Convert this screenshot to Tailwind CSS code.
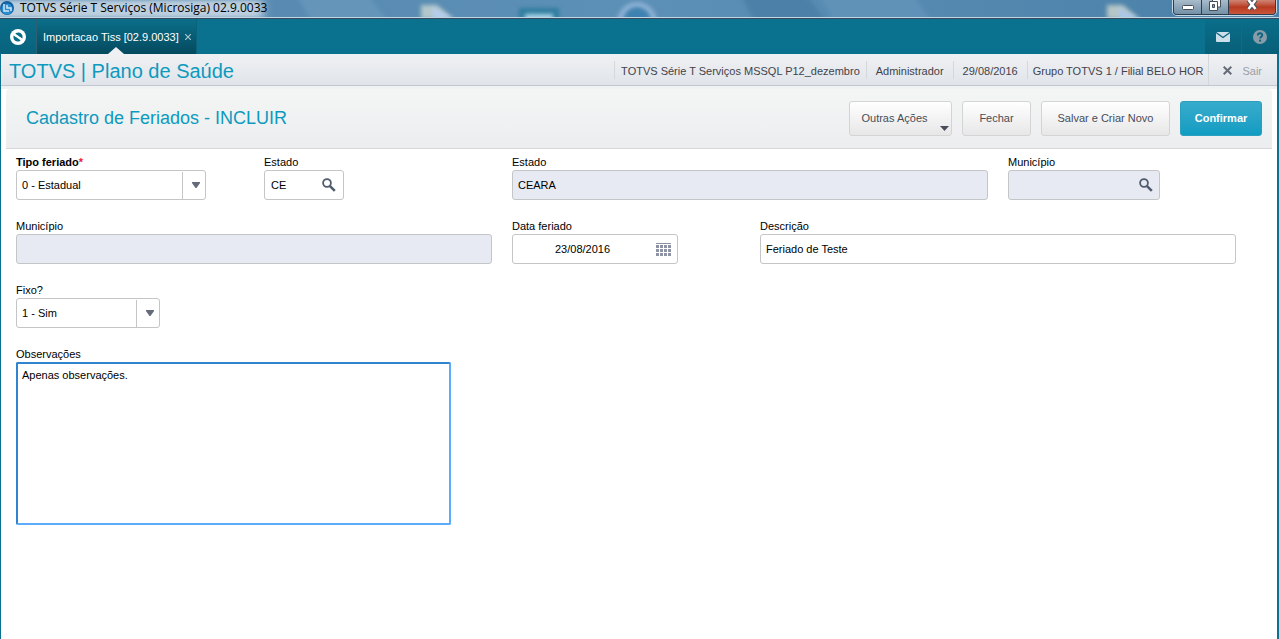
<!DOCTYPE html>
<html lang="pt-BR">
<head>
  <meta charset="UTF-8" />
  <meta name="viewport" content="width=device-width, initial-scale=1.0"/>
  <title>TOTVS Série T Serviços (Microsiga)</title>
  <script src="https://cdn.jsdelivr.net/npm/@tailwindcss/browser@4"></script>
</head>
<body class="min-h-screen flex flex-col bg-white font-['Liberation_Sans',Arial,sans-serif] text-[11px] leading-4 text-black">

  <!-- window title bar -->
  <header class="relative h-[19px] flex items-start justify-between overflow-hidden border-b border-[#3a4a5c] bg-linear-to-r from-[#5587ad] via-[#5d90b6] to-[#4a80a8]">
    <svg class="absolute inset-0 w-full h-[18px]" aria-hidden="true">
      <defs>
        <filter id="haze" x="-50%" y="-50%" width="200%" height="200%"><feGaussianBlur stdDeviation="2"/></filter>
        <filter id="haze2" x="-10%" y="-50%" width="120%" height="200%"><feGaussianBlur stdDeviation="5 2"/></filter>
      </defs>
      <path d="M296-6h70l24 30h-76z" fill="#6695ba" filter="url(#haze)"/>
      <path d="M740-6h66l22 30h-72z" fill="#4d80a8" filter="url(#haze)"/>
      <path d="M818-6h95l20 30h-97z" fill="#6092b8" filter="url(#haze)"/>
      <rect x="-20" y="0" width="283" height="18" fill="#bccfdf" filter="url(#haze2)"/>
      <path d="M421 5h16l16 14h-32z" fill="#b4c8cb" filter="url(#haze)"/>
      <path d="M432 7l22 12h-20z" fill="#b6cdf0" filter="url(#haze)"/>
      <rect x="519" y="8" width="40" height="14" fill="#2d7d9f" filter="url(#haze)"/>
      <rect x="525" y="14" width="28" height="8" fill="#a9d2e8" filter="url(#haze)"/>
      <circle cx="637" cy="22" r="17" fill="none" stroke="#94b6da" stroke-width="5" filter="url(#haze)"/>
      <circle cx="637" cy="20" r="12" fill="#3c82b0" filter="url(#haze)"/>
      <path d="M1107 5h16l16 14h-32z" fill="#b6c6c6" filter="url(#haze)"/>
      <path d="M1118 8l22 11h-20z" fill="#a9c8ec" filter="url(#haze)"/>
      <rect y="17" width="100%" height="1" fill="#c0d6e4"/>
    </svg>
    <div class="relative flex items-center gap-[6px] h-4">
      <svg class="w-[14px] h-4" viewBox="0 0 14 16" aria-hidden="true">
        <circle cx="7" cy="8" r="7" fill="#1560a0"/>
        <circle cx="7" cy="9" r="5.500" fill="#2a8fd0"/>
        <path d="M4 4v7h5M7 5v3h4v3" fill="none" stroke="#cfe8f8" stroke-width="1.500"/>
      </svg>
      <h1 class="font-['Open_Sans',sans-serif] text-[12px] leading-4">TOTVS Série T Serviços (Microsiga) 02.9.0033</h1>
    </div>
    <div class="relative flex h-[15px] mr-[3px] rounded-b-[4px] border border-t-0 border-[#2d3e50] overflow-hidden shadow-[0_0_0_1px_#c5d8e6]">
      <button aria-label="Minimizar" class="w-[28px] flex justify-center border-r border-[#2d3e50] bg-linear-to-b from-[#a9bccb] to-[#7390a6]">
        <svg class="w-3 h-3" viewBox="0 0 12 12"><rect x=".5" y="5.500" width="11" height="4" rx="1" fill="#fff" stroke="#454f5c"/></svg>
      </button>
      <button aria-label="Restaurar" class="w-[27px] flex justify-center border-r border-[#2d3e50] bg-linear-to-b from-[#a9bccb] to-[#7390a6]">
        <svg class="w-3 h-3" viewBox="0 0 12 12"><path d="M3.500-1h8v8h-8z" fill="#fff" stroke="#454f5c"/><path d="M.5 1.500h8v9h-8z" fill="#fff" stroke="#454f5c"/><path d="M3.500 4.500h2v3h-2z" fill="#8ea5b8" stroke="#454f5c"/></svg>
      </button>
      <button aria-label="Fechar janela" class="w-[46px] flex justify-center bg-linear-to-b from-[#cf8575] via-[#b83a20] to-[#c8553a]">
        <svg class="w-3 h-3" viewBox="0 0 12 12"><path d="M2.500 0l7 9M9.500 0l-7 9" stroke="#454f5c" stroke-width="4.500"/><path d="M2.500 0l7 9M9.500 0l-7 9" stroke="#fff" stroke-width="2.600"/></svg>
      </button>
    </div>
  </header>

  <!-- tabs -->
  <nav class="h-[35px] flex justify-between bg-[#0a728f]">
    <div class="flex">
      <button aria-label="Início" class="w-[37px] flex items-center justify-center border-r border-[#2b6173] bg-linear-to-b from-[#0a6e8a] to-[#08637d]">
        <svg class="w-4 h-4" viewBox="0 0 16 16">
          <circle cx="8" cy="8" r="8" fill="#fff"/>
          <path d="M4.500 6l1.500-2c3-1.500 6 0 6.500 3v2.500zM11.500 10L10 12c-3 1.500-6 0-6.500-3V6.500z" fill="#0a6e8a"/>
          <path d="M4.500 5.500l7 5" stroke="#fff" stroke-width="2.200"/>
        </svg>
      </button>
      <div class="relative flex items-center gap-[6px] pl-[6px] pr-[5px] border-r border-[#0a627b] bg-linear-to-b from-[#0b6f8a] to-[#054a5f] text-white">
        <a href="#" class="whitespace-nowrap">Importacao Tiss [02.9.0033]</a>
        <button aria-label="Fechar aba" class="w-[6px]">
          <svg class="w-[6px] h-[6px]" viewBox="0 0 6 6"><path d="M0 0l6 6M6 0L0 6" stroke="#a8c6d0" stroke-width="1.200"/></svg>
        </button>
        <svg class="absolute bottom-0 left-1/2 -translate-x-1/2 w-4 h-[7px]" viewBox="0 0 16 7"><path d="M8 0l8 7H0z" fill="#eff0f3"/></svg>
      </div>
    </div>
    <div class="flex">
      <button aria-label="Mensagens" class="w-[37px] flex items-center justify-center border-r border-[#2b6173] bg-linear-to-b from-[#0a6e8a] to-[#085f78]">
        <svg class="w-[14px] h-[10px]" viewBox="0 0 14 10"><rect width="14" height="10" rx="1" fill="#cddfe8"/><path d="M0 .5l7 5 7-5" fill="none" stroke="#0a6480" stroke-width="1.300"/></svg>
      </button>
      <button aria-label="Ajuda" class="w-[37px] pr-[2px] flex items-center justify-center bg-linear-to-b from-[#0a6e8a] to-[#085f78]">
        <svg class="w-[14px] h-[14px]" viewBox="0 0 14 14"><circle cx="7" cy="7" r="7" fill="#8a9ca8"/><path d="M4.800 5.500c0-3 4.600-2.900 4.500-.2 0 1.500-2.200 1.500-2.200 3.200" fill="none" stroke="#0a6480" stroke-width="1.800"/><circle cx="7.100" cy="10.700" r="1.100" fill="#0a6480"/></svg>
      </button>
    </div>
  </nav>

  <div class="grow border-l border-r-2 border-l-[#0a728f] border-r-[#0a728f]">
    <!-- module bar -->
    <div class="h-8 flex items-center justify-between pl-2 border-b border-[#c3c7cf] bg-linear-to-b from-[#f0f1f3] to-[#e0e4ea] text-[#3f434c]">
      <h2 class="pt-[2px] text-[20px] leading-6 text-[#0c9abe] whitespace-nowrap">TOTVS | Plano de Saúde</h2>
      <div class="flex items-center h-full whitespace-nowrap">
        <span class="border-l border-[#d5d8da] pt-[2px] px-[6px]">TOTVS Série T Serviços MSSQL P12_dezembro</span>
        <span class="border-l border-[#d5d8da] pt-[2px] px-[9px]">Administrador</span>
        <span class="border-l border-[#d5d8da] pt-[2px] px-[9px]">29/08/2016</span>
        <span class="border-l border-[#d5d8da] pt-[2px] px-[5px]">Grupo TOTVS 1 / Filial BELO HOR</span>
        <button class="h-full flex items-center gap-[10px] border-l border-[#d5d8da] pt-[2px] pl-[14px] pr-[15px] text-[#9a9ea9]">
          <svg class="w-[9px] h-[9px]" viewBox="0 0 9 9" aria-hidden="true"><path d="M.7.7l7.600 7.600M8.300.7L.7 8.300" stroke="#666b78" stroke-width="2"/></svg>
          Sair
        </button>
      </div>
    </div>

    <!-- page header with actions -->
    <div class="h-[63px] pt-[3px] pl-[5px] pr-[5px] bg-linear-to-b from-[#f0f1f3] from-5% to-white to-5%">
      <div class="h-[60px] flex items-center justify-between pl-5 pr-[10px] rounded-t-[4px] border-b border-[#d6d8d9] bg-linear-to-b from-[#f4f6f5] to-[#ecedef]">
        <h3 class="pb-[2px] text-[18px] leading-6 text-[#0c9abe] whitespace-nowrap">Cadastro de Feriados - INCLUIR</h3>
        <div class="flex gap-[10px] text-[#494d58] whitespace-nowrap">
          <button class="relative w-[103px] h-[35px] pr-3 pb-[2px] rounded-[3px] border border-[#d3d4d5] bg-linear-to-b from-white to-[#e7e7e8]">
            Outras Ações
            <svg class="absolute right-[2px] bottom-1 w-[9px] h-[5px]" viewBox="0 0 9 5" aria-hidden="true"><path d="M0 0h9L4.500 5z" fill="#494d58"/></svg>
          </button>
          <button class="w-[69px] h-[35px] pb-[2px] rounded-[3px] border border-[#d3d4d5] bg-linear-to-b from-white to-[#e7e7e8]">Fechar</button>
          <button class="w-[129px] h-[35px] pb-[2px] rounded-[3px] border border-[#d3d4d5] bg-linear-to-b from-white to-[#e7e7e8]">Salvar e Criar Novo</button>
          <button class="w-[82px] h-[35px] pb-[2px] rounded-[3px] border border-[#2a9fc0] bg-linear-to-b from-[#36abcc] to-[#109cc2] font-bold text-white">Confirmar</button>
        </div>
      </div>
    </div>

    <!-- form -->
    <form class="grid grid-cols-5 gap-x-5 gap-y-[18px] pl-[15px] pr-[41px] pt-[5px]">
      <div>
        <label for="tipo" class="block font-bold">Tipo feriado<span class="text-[#f0143c]">*</span></label>
        <div class="relative w-[190px] h-[30px] rounded-[3px] border border-[#c3c5c7]">
          <select id="tipo" class="appearance-none w-full h-full pl-[5px] outline-none"><option>0 - Estadual</option></select>
          <span class="absolute right-0 top-px bottom-0 w-[23px] pl-1 pb-[2px] border-l border-[#c3c5c7] flex items-center justify-center pointer-events-none">
            <svg class="w-2 h-[6px]" viewBox="0 0 8 6"><path d="M0 0h8v1L4.500 6h-1L0 1z" fill="#666b7b"/></svg>
          </span>
        </div>
      </div>
      <div>
        <label for="uf" class="block">Estado</label>
        <div class="w-[80px] h-[30px] flex items-center pr-[7px] rounded-[3px] border border-[#c3c5c7]">
          <input id="uf" type="text" value="CE" class="grow min-w-0 h-full pl-[6px] outline-none" />
          <button type="button" aria-label="Pesquisar estado">
            <svg class="w-[14px] h-[14px]" viewBox="0 0 14 14"><circle cx="5" cy="5" r="3.900" fill="none" stroke="#505c6e" stroke-width="1.800"/><path d="M7.800 7.800l5 5" stroke="#505c6e" stroke-width="2.600"/></svg>
          </button>
        </div>
      </div>
      <div class="col-span-2">
        <label for="estado" class="block">Estado</label>
        <input id="estado" type="text" value="CEARA" readonly class="w-full h-[30px] px-[5px] rounded-[3px] border border-[#c3c5c7] bg-[#e7eaf3] outline-none" />
      </div>
      <div>
        <label for="codmun" class="block">Município</label>
        <div class="w-[152px] h-[30px] flex items-center pr-[6px] rounded-[3px] border border-[#c3c5c7] bg-[#e7eaf3]">
          <input id="codmun" type="text" readonly class="grow min-w-0 h-full pl-[5px] outline-none" />
          <button type="button" aria-label="Pesquisar município">
            <svg class="w-[14px] h-[14px]" viewBox="0 0 14 14"><circle cx="5" cy="5" r="3.900" fill="none" stroke="#505c6e" stroke-width="1.800"/><path d="M7.800 7.800l5 5" stroke="#505c6e" stroke-width="2.600"/></svg>
          </button>
        </div>
      </div>

      <div class="col-span-2">
        <label for="municipio" class="block">Município</label>
        <input id="municipio" type="text" readonly class="w-full h-[30px] px-[5px] rounded-[3px] border border-[#c3c5c7] bg-[#e7eaf3] outline-none" />
      </div>
      <div>
        <label for="data" class="block">Data feriado</label>
        <div class="w-[166px] h-[30px] flex items-center pr-[6px] rounded-[3px] border border-[#c3c5c7]">
          <input id="data" type="text" value="23/08/2016" class="grow min-w-0 h-full pr-1 text-center outline-none" />
          <button type="button" aria-label="Abrir calendário">
            <svg class="w-[15px] h-[13px]" viewBox="0 0 15 13" fill="#8d93a3"><path d="M0 0h15v1H0zM0 2h3v3H0zM4 2h3v3H4zM8 2h3v3H8zM12 2h3v3h-3zM0 6h3v3H0zM4 6h3v3H4zM8 6h3v3H8zM12 6h3v3h-3zM0 10h3v3H0zM4 10h3v3H4zM8 10h3v3H8zM12 10h3v3h-3z"/></svg>
          </button>
        </div>
      </div>
      <div class="col-span-2">
        <label for="descricao" class="block">Descrição</label>
        <input id="descricao" type="text" value="Feriado de Teste" class="w-full h-[30px] px-[5px] rounded-[3px] border border-[#c3c5c7] outline-none" />
      </div>

      <div class="col-span-5">
        <label for="fixo" class="block">Fixo?</label>
        <div class="relative w-[144px] h-[30px] rounded-[3px] border border-[#c3c5c7]">
          <select id="fixo" class="appearance-none w-full h-full pl-[5px] outline-none"><option>1 - Sim</option></select>
          <span class="absolute right-0 top-px bottom-0 w-[23px] pl-1 pb-[2px] border-l border-[#c3c5c7] flex items-center justify-center pointer-events-none">
            <svg class="w-2 h-[6px]" viewBox="0 0 8 6"><path d="M0 0h8v1L4.500 6h-1L0 1z" fill="#666b7b"/></svg>
          </span>
        </div>
      </div>

      <div class="col-span-2">
        <label for="obs" class="block">Observações</label>
        <textarea id="obs" class="block w-[435px] max-w-full h-[163px] px-1 pt-[3px] resize-none rounded-[2px] border-2 border-t-[#2f83cf] border-l-[#2f83cf] border-r-[#5cacfa] border-b-[#5cacfa] outline-none">Apenas observações.</textarea>
      </div>
    </form>
  </div>
</body>
</html>
